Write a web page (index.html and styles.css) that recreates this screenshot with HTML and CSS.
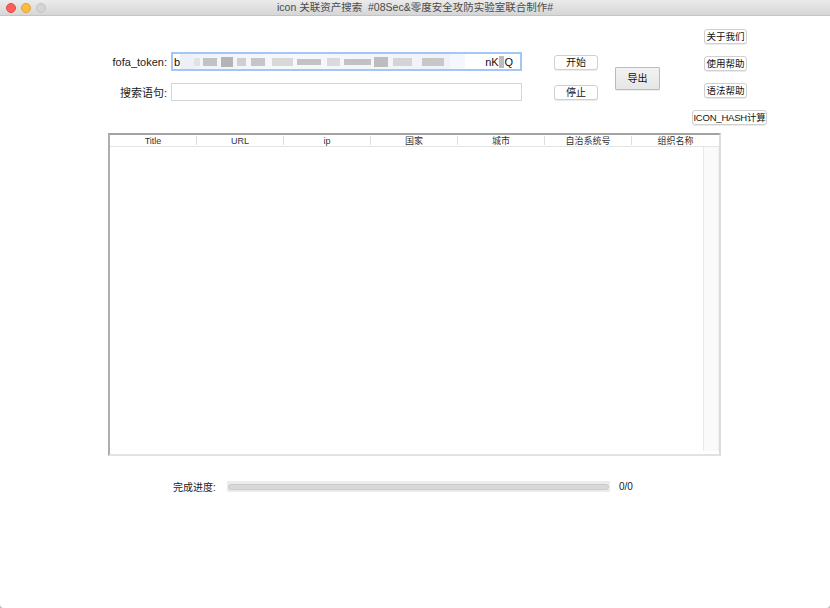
FILE: index.html
```html
<!DOCTYPE html>
<html lang="zh">
<head>
<meta charset="utf-8">
<title>icon 关联资产搜索</title>
<link rel="stylesheet" href="styles.css">
</head>
<body>
<div class="window">
  <div class="titlebar">
    <div class="lights">
      <span class="light red"></span>
      <span class="light yellow"></span>
      <span class="light gray"></span>
    </div>
    <div class="title">icon 关联资产搜索&nbsp;&nbsp;#08Sec&amp;零度安全攻防实验室联合制作#</div>
  </div>

  <div class="top">
    <div class="form">
      <div class="row row1">
        <div class="label">fofa_token:</div>
        <div class="field focus">
          <span class="ch">b</span>
          <span class="mosaic">
            <i class="m1"></i><i class="m2"></i><i class="m3"></i><i class="m4"></i><i class="m5"></i><i class="m6"></i><i class="m7"></i><i class="m8"></i><i class="m9"></i><i class="m10"></i><i class="m11"></i><i class="m12"></i><i class="m13"></i><i class="m14"></i>
          </span>
          <span class="ch tail">nK</span><i class="mq"></i><span class="ch">Q</span>
        </div>
      </div>
      <div class="row row2">
        <div class="label">搜索语句:</div>
        <div class="field"></div>
      </div>
    </div>

    <div class="ctl">
      <div class="btn">开始</div>
      <div class="btn stop">停止</div>
    </div>

    <div class="exp">
      <div class="btn export">导出</div>
    </div>

    <div class="side">
      <div class="btn sbtn">关于我们</div>
      <div class="btn sbtn">使用帮助</div>
      <div class="btn sbtn">语法帮助</div>
      <div class="btn hash">ICON_HASH计算</div>
    </div>
  </div>

  <div class="table">
    <div class="thead">
      <div class="th">Title</div>
      <div class="th">URL</div>
      <div class="th">ip</div>
      <div class="th">国家</div>
      <div class="th">城市</div>
      <div class="th">自治系统号</div>
      <div class="th last">组织名称</div>
    </div>
    <div class="tbody">
      <div class="rows"></div>
      <div class="vscroll"></div>
    </div>
  </div>

  <div class="progress">
    <div class="plabel">完成进度:</div>
    <div class="pbar"><div class="ptrack"></div></div>
    <div class="pcount">0/0</div>
  </div>
</div>
</body>
</html>
```

FILE: styles.css
```css
html, body {
  margin: 0;
  padding: 0;
  background: #b9b9b9;
}

body {
  font-family: "Liberation Sans", "Noto Sans CJK SC", sans-serif;
  color: #222;
}

.window {
  width: 830px;
  height: 608px;
  background: #ffffff;
  border-radius: 0 0 4px 4px;
  overflow: hidden;
}

.titlebar {
  height: 16px;
  background: linear-gradient(#ebebeb, #d6d6d6);
  border-bottom: 1px solid #c4c4c4;
  box-sizing: border-box;
  display: flex;
  align-items: center;
  position: relative;
}

.lights {
  display: flex;
  gap: 5px;
  padding-left: 6px;
}

.light {
  width: 10px;
  height: 10px;
  border-radius: 50%;
  box-sizing: border-box;
}

.light.red { background: #fc605b; border: 1px solid #de4a44; }
.light.yellow { background: #fdbc40; border: 1px solid #dea034; }
.light.gray { background: #d4d4d4; border: 1px solid #c2c2c2; }

.title {
  position: absolute;
  left: 0;
  right: 0;
  top: 0;
  line-height: 15px;
  text-align: center;
  font-size: 10.5px;
  color: #4a4a4a;
}

/* top area */
.top {
  display: flex;
  align-items: flex-start;
  height: 109px;
}

.form {
  margin-left: 100px;
  padding-top: 36px;
  display: flex;
  flex-direction: column;
}

.row {
  display: flex;
  align-items: center;
  gap: 4px;
}

.row1 { height: 19px; }
.row2 { height: 18px; margin-top: 12px; }

.label {
  width: 67px;
  text-align: right;
  font-size: 11px;
  color: #222;
}

.field {
  width: 351px;
  height: 18px;
  box-sizing: border-box;
  border: 1px solid #d6d6d6;
  background: #fff;
  display: flex;
  align-items: center;
  overflow: hidden;
}

.field.focus {
  height: 19px;
  border: 2px solid #a4c6f4;
  padding-left: 1px;
}

.ch {
  font-size: 11px;
  color: #111;
}

.mosaic {
  display: flex;
  align-items: center;
  height: 15px;
  width: 285px;
  background: linear-gradient(90deg, #eef3fb, #f6f8fc 40%, #eef2f8);
}

.mosaic i { display: block; height: 8px; }
.mosaic .m1 { width: 14px; height: 15px; background: #edf1f7; }
.mosaic .m2 { width: 7px; background: #e2e2e2; }
.mosaic .m3 { width: 14px; background: #c2c2c2; margin-left: 3px; }
.mosaic .m4 { width: 12px; height: 10px; background: #b4b4b4; margin-left: 4px; }
.mosaic .m5 { width: 10px; background: #cfcfcf; margin-left: 4px; }
.mosaic .m6 { width: 14px; background: #c6c6c6; margin-left: 5px; }
.mosaic .m7 { width: 22px; background: #d8d8d8; margin-left: 7px; }
.mosaic .m8 { width: 24px; height: 6px; background: #c3c3c3; margin-left: 4px; }
.mosaic .m9 { width: 14px; background: #dadada; margin-left: 6px; }
.mosaic .m10 { width: 28px; height: 6px; background: #c2c2c2; margin-left: 4px; }
.mosaic .m11 { width: 14px; height: 10px; background: #bdbdbd; margin-left: 3px; }
.mosaic .m12 { width: 20px; background: #d4d4d4; margin-left: 5px; }
.mosaic .m13 { width: 22px; background: #c7c7c7; margin-left: 10px; }
.mosaic .m14 { width: 16px; height: 15px; background: #f4f7fc; margin-left: 6px; }

.tail { margin-left: 20px; }
.mq { display: block; width: 5px; height: 12px; background: #bcbcbc; margin-right: 1px; }

/* buttons */
.btn {
  box-sizing: border-box;
  height: 15px;
  line-height: 13px;
  font-size: 10px;
  text-align: center;
  background: #fff;
  border: 1px solid #d0d0d0;
  border-radius: 3px;
  box-shadow: 0 1px 0 rgba(0, 0, 0, 0.08);
  color: #111;
  white-space: nowrap;
}

.ctl {
  margin-left: 32px;
  padding-top: 39px;
  width: 44px;
  display: flex;
  flex-direction: column;
}

.ctl .stop { margin-top: 15px; }

.exp {
  margin-left: 17px;
  padding-top: 51px;
  width: 45px;
}

.btn.export {
  height: 23px;
  line-height: 21px;
  background: linear-gradient(#f2f2f2, #e6e6e6);
  border: 1px solid #bcbcbc;
  border-radius: 1px;
}

.side {
  margin-left: 32px;
  padding-top: 13px;
  width: 75px;
  display: flex;
  flex-direction: column;
  align-items: flex-start;
  gap: 12px;
}

.side .btn {
  font-size: 9.5px;
}

.sbtn {
  width: 43px;
  margin-left: 12px;
}

.btn.hash {
  width: 75px;
  letter-spacing: -0.2px;
}

/* table */
.table {
  margin-top: 8px;
  margin-left: 108px;
  width: 613px;
  height: 323px;
  box-sizing: border-box;
  border-top: 2px solid #a3a3a3;
  border-left: 2px solid #adadad;
  border-right: 2px solid #dcdcdc;
  border-bottom: 2px solid #e2e2e2;
  display: flex;
  flex-direction: column;
}

.thead {
  height: 12px;
  box-sizing: border-box;
  border-bottom: 1px solid #e4e4e4;
  display: grid;
  grid-template-columns: repeat(7, 87px);
  align-items: center;
}

.th {
  height: 9px;
  line-height: 10px;
  font-size: 9px;
  text-align: center;
  color: #333;
  border-right: 1px solid #dedede;
}

.th.last { border-right: none; }

.tbody {
  flex: 1;
  display: flex;
}

.rows { flex: 1; }

.vscroll {
  width: 14px;
  margin-bottom: 3px;
  background: #fafafa;
  border-left: 1px solid #e8e8e8;
  border-right: 1px solid #f0f0f0;
}

/* progress */
.progress {
  margin-top: 25px;
  margin-left: 173px;
  display: flex;
  align-items: center;
  height: 11px;
}

.plabel {
  width: 54px;
  font-size: 10px;
  color: #222;
}

.pbar {
  width: 383px;
  height: 11px;
  background: #ececec;
  display: flex;
  align-items: center;
  padding: 0 1px;
  box-sizing: border-box;
}

.ptrack {
  flex: 1;
  height: 6px;
  border-radius: 3px;
  background: #d9d9d9;
  border: 1px solid #cacaca;
  box-sizing: border-box;
}

.pcount {
  margin-left: 9px;
  font-size: 10px;
  color: #222;
}
```
